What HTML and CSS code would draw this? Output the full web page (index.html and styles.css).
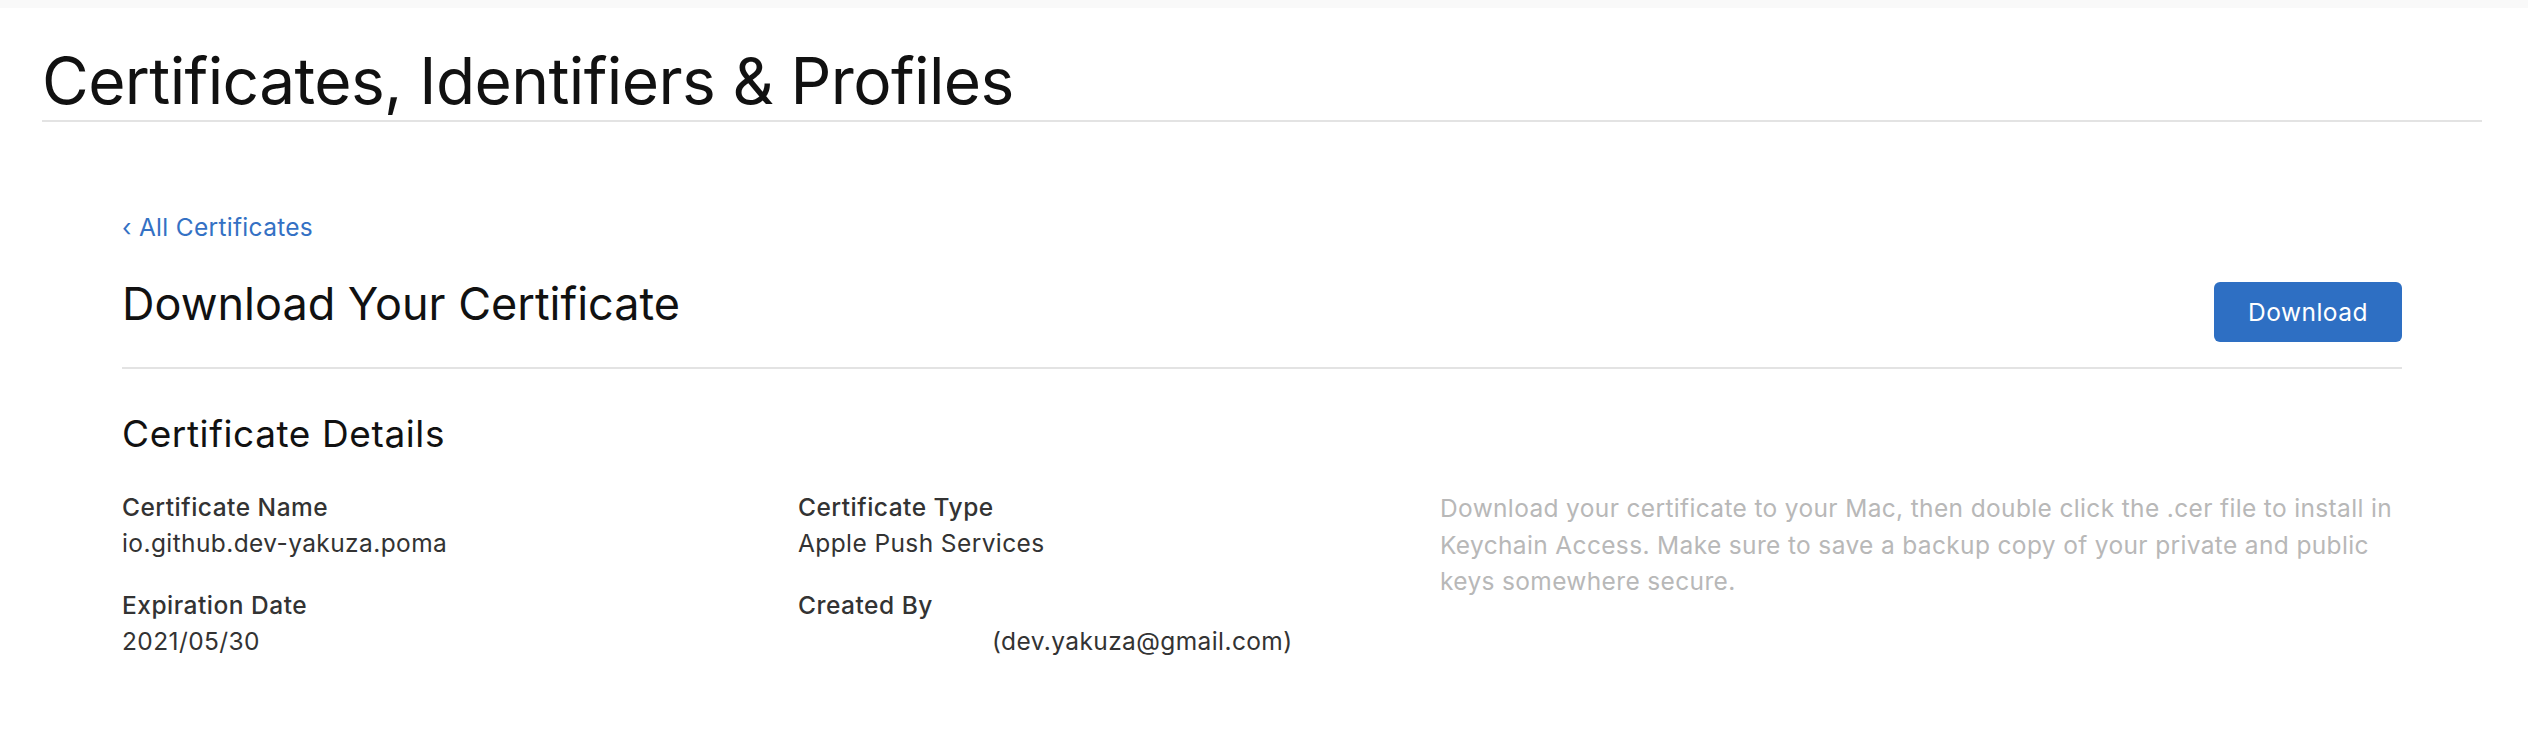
FILE: index.html
```html
<!DOCTYPE html>
<html lang="en">
<head>
<meta charset="utf-8">
<title>Certificates, Identifiers &amp; Profiles</title>
<link rel="stylesheet" href="styles.css">
</head>
<body>
<div class="topstrip"></div>
<header class="page-header">
  <h1 class="page-title">Certificates, Identifiers &amp; Profiles</h1>
</header>
<main class="content">
  <a class="back-link" href="#"><span class="chev">&#8249;</span> All Certificates</a>
  <div class="title-row">
    <h2 class="section-title">Download Your Certificate</h2>
    <button class="btn-primary" type="button">Download</button>
  </div>
  <h3 class="details-title">Certificate Details</h3>
  <div class="details-grid">
    <div class="col">
      <div class="field">
        <div class="label">Certificate Name</div>
        <div class="value">io.github.dev-yakuza.poma</div>
      </div>
      <div class="field">
        <div class="label">Expiration Date</div>
        <div class="value">2021/05/30</div>
      </div>
    </div>
    <div class="col">
      <div class="field">
        <div class="label">Certificate Type</div>
        <div class="value">Apple Push Services</div>
      </div>
      <div class="field">
        <div class="label">Created By</div>
        <div class="value"><span class="redacted"></span>(dev.yakuza@gmail.com)</div>
      </div>
    </div>
    <p class="note">Download your certificate to your Mac, then double click the .cer file to install in Keychain Access. Make sure to save a backup copy of your private and public keys somewhere secure.</p>
  </div>
</main>
</body>
</html>
```

FILE: styles.css
```css
html, body {
  margin: 0;
  padding: 0;
  background: #ffffff;
}
body {
  font-family: "Inter", "Roboto", "Liberation Sans", sans-serif;
  color: #333333;
  width: 2528px;
  height: 748px;
  overflow: hidden;
}
.topstrip {
  height: 8px;
  background: #f9f9f9;
}
.page-header {
  margin: 0 46px 0 42px;
  border-bottom: 2px solid #e3e3e3;
}
.page-title {
  margin: 33px 0 0 0;
  font-size: 64px;
  line-height: 79px;
  font-weight: 400;
  color: #111111;
  letter-spacing: -0.6px;
}
.content {
  padding: 0 126px 0 122px;
}
.back-link {
  display: block;
  margin-top: 90px;
  font-size: 24.5px;
  line-height: 30px;
  letter-spacing: 0.3px;
  color: #3471c4;
  text-decoration: none;
}
.title-row {
  display: flex;
  justify-content: space-between;
  align-items: flex-start;
  padding: 34px 0 25px 0;
  border-bottom: 2px solid #e3e3e3;
}
.section-title {
  margin: 0;
  font-size: 45px;
  line-height: 56px;
  font-weight: 400;
  color: #111111;
}
.btn-primary {
  margin-top: 6px;
  width: 188px;
  height: 60px;
  border: 0;
  border-radius: 6px;
  background: #2e6fc3;
  color: #ffffff;
  font-family: inherit;
  font-size: 24.5px;
  letter-spacing: 0.5px;
  padding: 0;
}
.details-title {
  margin: 43px 0 0 0;
  font-size: 37px;
  line-height: 44px;
  font-weight: 400;
  letter-spacing: 0.6px;
  color: #111111;
}
.details-grid {
  display: grid;
  grid-template-columns: 676px 642px 1fr;
  margin-top: 33px;
}
.field + .field {
  margin-top: 26px;
}
.label {
  font-size: 24.5px;
  line-height: 36px;
  font-weight: 500;
  letter-spacing: 0.5px;
  color: #333333;
}
.value {
  font-size: 24.5px;
  line-height: 36px;
  letter-spacing: 0.4px;
  color: #333333;
}
.redacted {
  display: inline-block;
  width: 194px;
}
.note {
  margin: 0;
  padding-top: 1px;
  font-size: 24.5px;
  line-height: 36.5px;
  letter-spacing: 0.35px;
  color: #b8b8b8;
}
```
